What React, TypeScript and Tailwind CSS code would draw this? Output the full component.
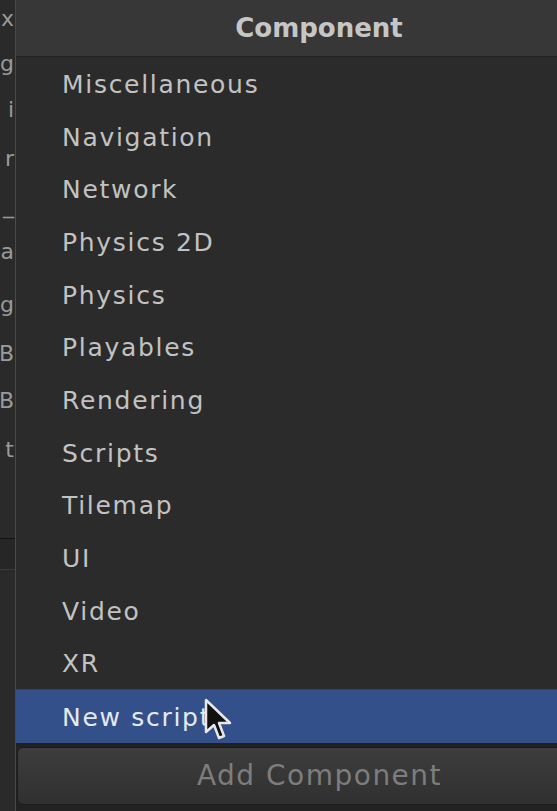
import React from 'react'

const items = [
  'Miscellaneous',
  'Navigation',
  'Network',
  'Physics 2D',
  'Physics',
  'Playables',
  'Rendering',
  'Scripts',
  'Tilemap',
  'UI',
  'Video',
  'XR',
]

// clipped bits of the inspector that sits behind the popup
const behind = [
  { t: 'x', h: 38 },
  { t: 'g', h: 52 },
  { t: 'i', h: 40 },
  { t: 'r', h: 58 },
  { t: '_', h: 36 },
  { t: 'a', h: 56 },
  { t: 'g', h: 50 },
  { t: 'B', h: 48 },
  { t: 'B', h: 46 },
  { t: 't', h: 52 },
]

function Cursor() {
  return (
    <svg width="30" height="44" viewBox="0 0 30 44" className="absolute left-[203px] top-[698px]">
      <path
        d="M3 2 L3 34 L11 27 L16 40 L21 38 L16 25 L27 25 Z"
        fill="#111"
        stroke="#e8e8e8"
        strokeWidth="2.5"
        strokeLinejoin="round"
      />
    </svg>
  )
}

export default function App() {
  return (
    <div
      className="relative w-[557px] h-[811px] overflow-hidden flex bg-[#222222]"
      style={{ fontFamily: '"DejaVu Sans", Verdana, sans-serif' }}
    >
      <div className="w-[15px] shrink-0 flex flex-col bg-[#2a2a2a] overflow-hidden">
        {behind.map((b, i) => (
          <div
            key={i}
            className="flex items-center justify-end pr-[1px] text-[22px] leading-none text-[#9a9a9a] whitespace-nowrap"
            style={{ height: b.h }}
          >
            {b.t}
          </div>
        ))}
        <div className="h-[62px]" />
        <div className="h-px bg-[#111]" />
        <div className="h-[30px] bg-[#262626]" />
        <div className="h-px bg-[#3a3a3a]" />
      </div>

      <div className="w-[607px] shrink-0 flex flex-col border-l border-[#4a4a4a]">
        <div className="h-[57px] flex items-center justify-center bg-[#373737] border-b border-[#222] text-[26px] font-bold text-[#c6c6c6]">
          Component
        </div>
        <div className="flex flex-col bg-[#2b2b2b]">
          {items.map((name) => (
            <div
              key={name}
              className="h-[52.67px] flex items-center pl-[46px] pt-[3px] text-[25px] tracking-[1.7px] text-[#c2c2c2]"
            >
              {name}
            </div>
          ))}
          <div className="h-[54px] flex items-center pl-[46px] pt-[2px] text-[25px] tracking-[1.7px] text-[#e4e9f2] bg-[#34508b] border-t border-[#2a3f6e]">
            New script
          </div>
        </div>
        <div className="h-[4px] bg-[#202020]" />
        <div className="h-[58px] ml-[1px] flex items-center justify-center rounded-[6px] bg-gradient-to-b from-[#3d3d3d] to-[#303030] border border-[#1c1c1c] text-[28px] tracking-[1.5px] text-[#7d7d7d]">
          Add Component
        </div>
      </div>

      <Cursor />
    </div>
  )
}
